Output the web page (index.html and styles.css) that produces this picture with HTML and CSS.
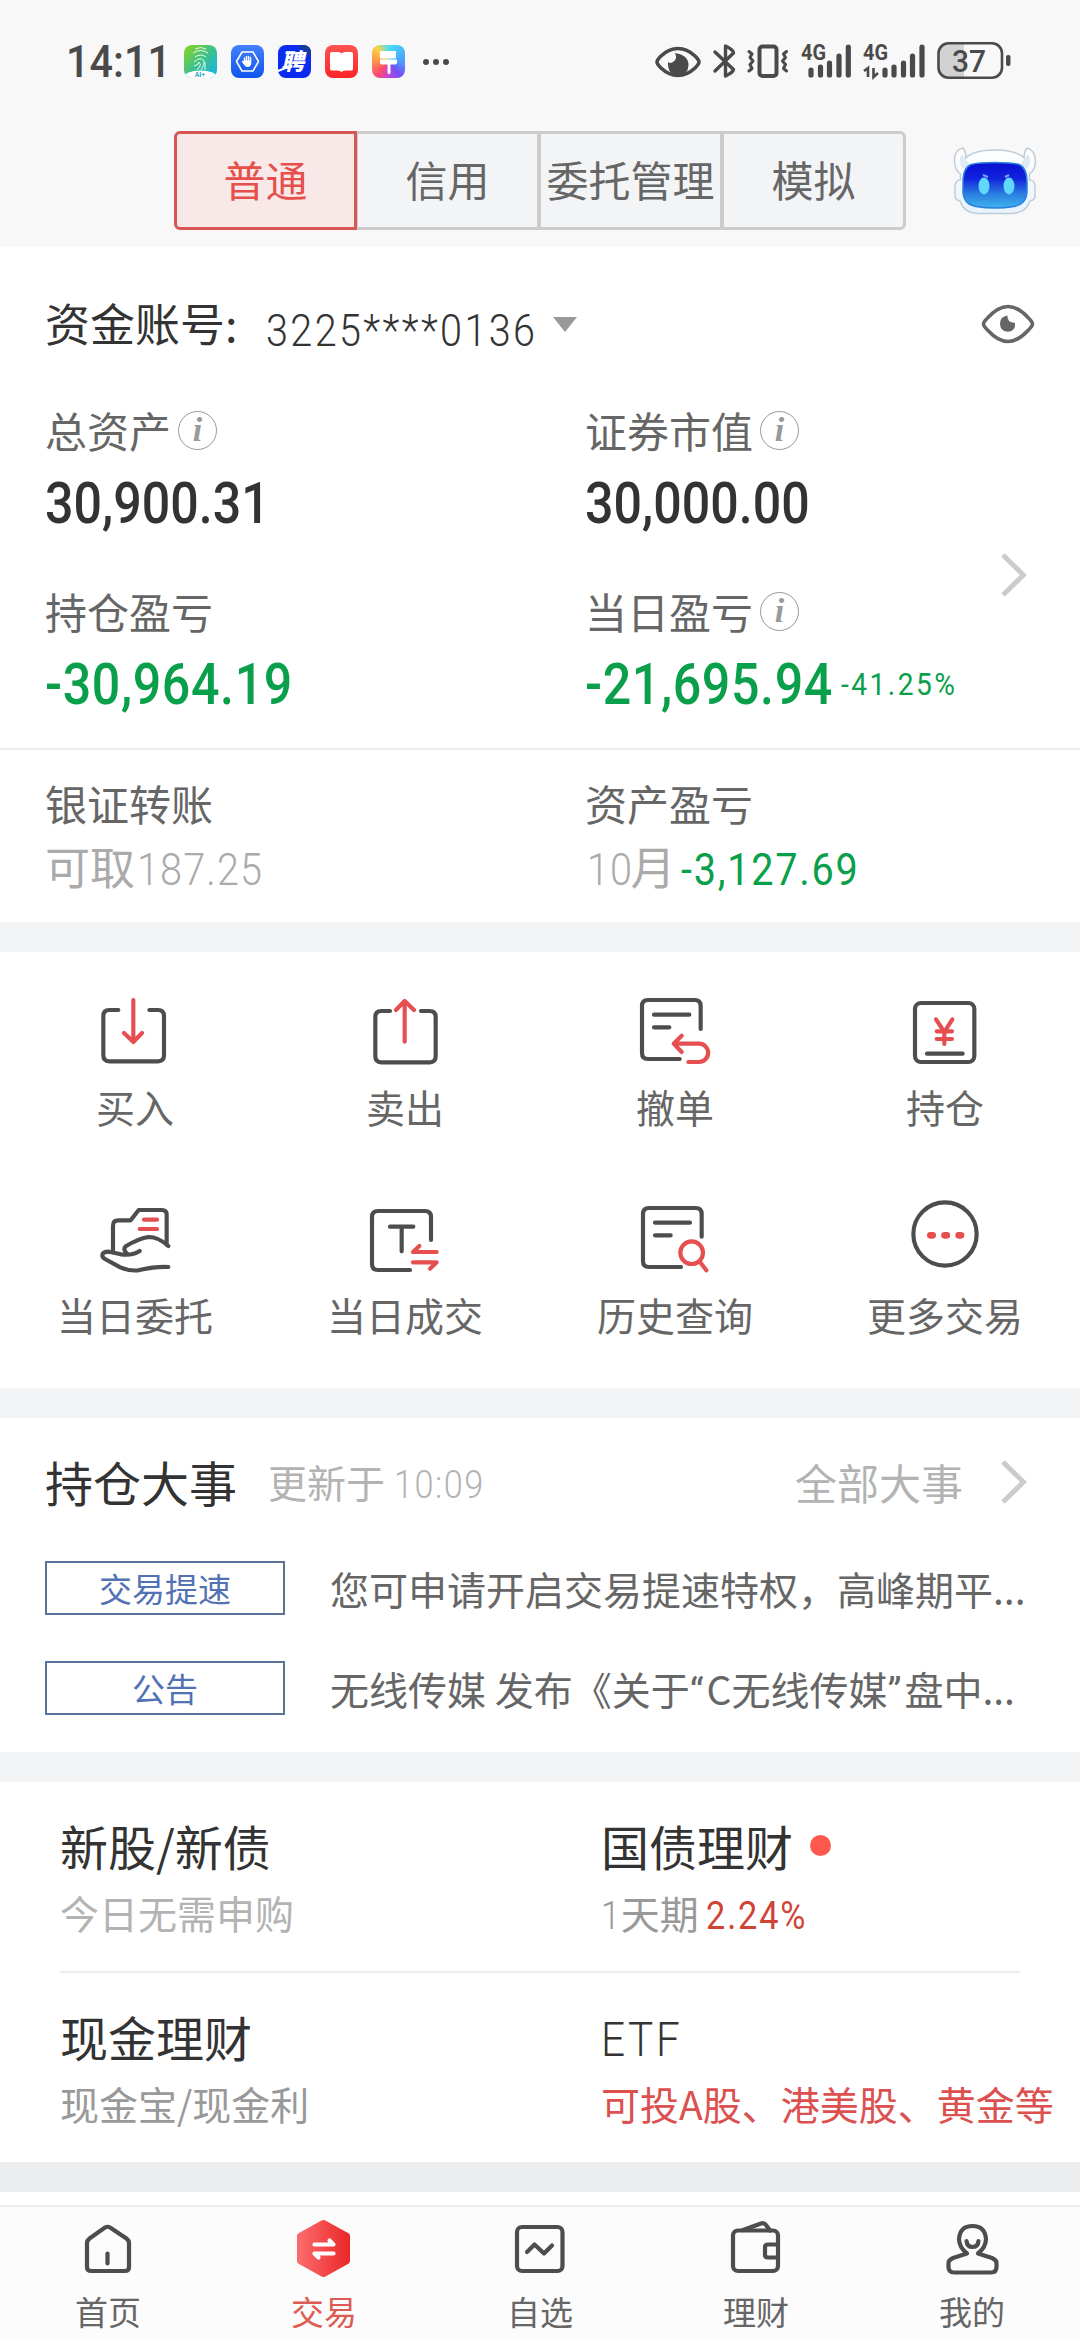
FILE: index.html
```
<!DOCTYPE html>
<html lang="zh-CN">

<head>
    <meta charset="UTF-8">
    <meta name="viewport" content="width=device-width, initial-scale=1.0">
    <title>交易</title>
    <link rel="stylesheet" href="styles.css">
</head>

<body>
    <header>
        <div class="status">
            <span class="time">14:11</span>
            <div class="apps">
                <svg viewBox="0 0 33 33">
                    <defs>
                        <linearGradient id="finger" x1="0" y1="0" x2="1" y2="1">
                            <stop offset="0" stop-color="#8fd61c" />
                            <stop offset=".5" stop-color="#3cc08c" />
                            <stop offset="1" stop-color="#0fb4f0" />
                        </linearGradient>
                        <clipPath id="round"><rect width="33" height="33" rx="8" /></clipPath>
                    </defs>
                    <g clip-path="url(#round)">
                        <rect width="33" height="33" fill="url(#finger)" />
                        <ellipse cx="16.500" cy="32" rx="17" ry="6.500" fill="#fff" />
                        <g fill="none" stroke="#e6fbe9" stroke-width="1">
                            <path d="M11 4q5.500-3 11 0M9 8q7.500-5 15 0M11 12q6-4 11 0M10 17q7-6 10-1q1 4-3 9M10 21q5-1 5-4M14 18q3-1 2 3l-3 4M21 17v8" />
                        </g>
                    </g>
                    <text x="11" y="32" font-size="6.500" font-weight="700" fill="#27a5b8">AI+</text>
                </svg>
                <svg viewBox="0 0 33 33">
                    <defs>
                        <linearGradient id="guard" x1="0" y1="0" x2="0" y2="1">
                            <stop offset="0" stop-color="#4480f8" />
                            <stop offset="1" stop-color="#0f55ee" />
                        </linearGradient>
                    </defs>
                    <rect width="33" height="33" rx="8" fill="url(#guard)" />
                    <path d="M11 7h11l5.500 9.500L22 26H11L5.500 16.500z" fill="none" stroke="#fff" stroke-width="1.500" stroke-linejoin="round" />
                    <path d="M13.500 17v-4M15.500 17v-5.500M17.500 17v-5.500M19.500 17v-4.500" stroke="#fff" stroke-width="1.400" stroke-linecap="round" />
                    <path d="M12.800 15.500h7.400v3q-.5 3.500-3.500 3.500-2 0-3.500-2l-2.500-3.500 1-.5z" fill="#fff" />
                </svg>
                <svg viewBox="0 0 33 33">
                    <rect width="33" height="33" rx="8" fill="#0b2bee" />
                    <path d="M20 0h5q8 0 8 8v4z" fill="#173a94" />
                    <text x="8.500" y="25" font-size="23" font-weight="900" fill="#fff" transform="skewX(-12)">聘</text>
                    <path d="M0 26l10-4" stroke="#fff" stroke-width="2" />
                </svg>
                <svg viewBox="0 0 33 33">
                    <defs>
                        <linearGradient id="book" x1="0" y1="0" x2="0" y2="1">
                            <stop offset="0" stop-color="#fb5550" />
                            <stop offset="1" stop-color="#fb2427" />
                        </linearGradient>
                    </defs>
                    <rect width="33" height="33" rx="8" fill="url(#book)" />
                    <path d="M5 9q0-2 2-2h6q2.500 0 3.500 1.500Q17.500 7 20 7h6q2 0 2 2v15q0 1.500-2 1.500h-6q-2 0-3.500 1.500-1.500-1.500-3.500-1.500H7Q5 25.500 5 24z" fill="#fff" />
                </svg>
                <div class="theme-app">
                    <svg viewBox="0 0 33 33">
                        <rect x="8" y="6" width="16" height="7.500" rx="1" fill="#fff" />
                        <path d="M8 14.500h17v3q0 2-3 2h-3.500V28q-1.500 2.500-3 0v-8.500H11q-3 0-3-2z" fill="#fff" />
                    </svg>
                </div>
            </div>
            <svg class="dots" width="28" height="8" viewBox="0 0 28 8" fill="#4a4a4a">
                <circle cx="4" cy="4" r="3" />
                <circle cx="14" cy="4" r="3" />
                <circle cx="24" cy="4" r="3" />
            </svg>
            <svg class="system" width="360" height="44" viewBox="650 40 360 44">
                <g fill="none" stroke="#4a4a4a" stroke-width="3.600" stroke-linecap="round" stroke-linejoin="round">
                    <path d="M656 62q0-2 4-6 8-7.500 17-7.500t17 7.500q4 4 4 6t-4 6q-8 7.500-17 7.500t-17-7.500q-4-4-4-6z" />
                    <path d="M714 52l18.500 17.500q-.5 3-8 6.500V46q7.500 3.500 8 7L714 71" stroke-width="3.400" />
                    <rect x="758.500" y="46.500" width="17" height="29.500" rx="3" stroke-width="4" />
                    <path d="M748 51.500l3 2.500-2 3.500 3 3.500-3 3.500 2 4-3 2.500M785.500 51.500l-3 2.500 2 3.500-3 3.500 3 3.500-2 4 3 2.500" stroke-width="3" />
                </g>
                <path d="M674 53q3 6-2 9-3 2-5 0-.5 13 10 14 10-.5 10.500-11 0-10-13.500-12z" fill="#4a4a4a" />
                <g stroke="#4a4a4a" stroke-width="5.200" stroke-linecap="round">
                    <path d="M810 70v5M819.500 67v8M828.500 63v12M838 56v19M847.300 47v28" />
                    <path d="M884 70v5M893 67v8M902.500 63v12M911.500 56v19M921 47v28" />
                </g>
                <g class="net" fill="#4a4a4a">
                    <text x="800" y="60" textLength="25" lengthAdjust="spacingAndGlyphs">4G</text>
                    <text x="862" y="60" textLength="25" lengthAdjust="spacingAndGlyphs">4G</text>
                </g>
                <path d="M863 71l4-3v9M872.500 68v9l4.500-4" fill="none" stroke="#4a4a4a" stroke-width="2.600" />
                <path d="M963 44h-15q-10 0-10 10v13q0 10 10 10h15z" fill="#d2d2d2" />
                <rect x="937.500" y="43.300" width="63.500" height="34.400" rx="10" fill="none" stroke="#4a4a4a" stroke-width="2.600" />
                <rect x="1005" y="55" width="4.500" height="11" rx="2" fill="#4a4a4a" />
                <text class="charge" x="951" y="71.500" textLength="34" lengthAdjust="spacingAndGlyphs">37</text>
            </svg>
        </div>
        <div class="modes">
            <div class="tabs">
                <div class="tab active">普通</div>
                <div class="tab">信用</div>
                <div class="tab">委托管理</div>
                <div class="tab">模拟</div>
            </div>
            <svg class="robot" width="84" height="68" viewBox="0 0 84 68">
                <defs>
                    <linearGradient id="visor" x1="0" y1="0" x2="0" y2="1">
                        <stop offset="0" stop-color="#0a0fd0" />
                        <stop offset=".35" stop-color="#1122dd" />
                        <stop offset=".7" stop-color="#2c80e0" />
                        <stop offset="1" stop-color="#3fb4ee" />
                    </linearGradient>
                    <linearGradient id="shell" x1="0" y1="0" x2="0" y2="1">
                        <stop offset="0" stop-color="#ffffff" />
                        <stop offset="1" stop-color="#e6f3fd" />
                    </linearGradient>
                </defs>
                <path d="M10 1Q1 3 1.500 14q0 9 6 13v6q-5 0-5.500 6v10q0 4 5 5 4 12 18 12.500h34Q73 66 77 54q5-1 5-5V39q-.5-6-5.500-6v-6q6-4 6-13Q82 3 74 1q-3 4-3 10-8-8-29-8T13 11q0-6-3-10z" fill="url(#shell)" stroke="#c0ccd8" stroke-width="1.500" />
                <path d="M9 7q-5 8 1 15l6-5M75 7q5 8-1 15l-6-5" fill="#dfe9f4" />
                <path d="M42 15.500q17 0 24 2 8 3 8 18v10q-1 12-13 14-19 3-38 0-12-2-13-14v-10q0-15 8-18 7-2 24-2z" fill="url(#visor)" stroke="#2a80dc" stroke-width="1.500" />
                <ellipse cx="31" cy="39" rx="5.500" ry="8.500" fill="#5fd8fb" />
                <ellipse cx="56" cy="39" rx="5.500" ry="8.500" fill="#5fd8fb" />
                <path d="M30 28l5 2M52 30l4-2" stroke="#7aa4ff" stroke-width="2" />
            </svg>
        </div>
    </header>

    <section class="account">
        <div class="account-row">
            <span class="account-label">资金账号:</span>
            <div class="account-no"><span class="num">3225****0136</span></div>
            <svg class="caret" width="24" height="15" viewBox="0 0 24 15"><path d="M0 0h24L12 15z" fill="#999" /></svg>
            <svg class="eye" width="54" height="42" viewBox="0 0 54 42">
                <path d="M2.500 21q0-2 4-6Q17 3.500 27 3.500T47.500 15q4 4 4 6t-4 6Q37 38.500 27 38.500T6.500 27q-4-4-4-6z" fill="none" stroke="#666" stroke-width="3.600" />
                <path d="M26.500 12.500q-1 6.500 7.500 7.500 1 8.500-7.500 8.800-7.500-.5-7.500-8.300 0-7 7.500-8z" fill="#666" />
            </svg>
        </div>
        <div class="stats">
            <div class="stats-grid">
                <div class="stat">
                    <div class="label">总资产<i class="info">i</i></div>
                    <div class="value"><span class="num">30,900.31</span></div>
                </div>
                <div class="stat">
                    <div class="label">证券市值<i class="info">i</i></div>
                    <div class="value"><span class="num">30,000.00</span></div>
                </div>
                <div class="stat">
                    <div class="label">持仓盈亏</div>
                    <div class="value green"><span class="num loss">-30,964.19</span></div>
                </div>
                <div class="stat">
                    <div class="label">当日盈亏<i class="info">i</i></div>
                    <div class="value green"><span class="num loss daily">-21,695.94</span><span class="num percent">-41.25%</span></div>
                </div>
            </div>
            <svg class="chevron" width="26" height="44" viewBox="0 0 26 44"><path d="M2 2l20.500 20L2 42" /></svg>
        </div>
        <div class="transfer">
            <div>
                <div class="label">银证转账</div>
                <div class="sub">可取<span class="num">187.25</span></div>
            </div>
            <div>
                <div class="label">资产盈亏</div>
                <div class="sub"><span class="num month">10</span>月<span class="num green">-3,127.69</span></div>
            </div>
        </div>
    </section>

    <section class="actions">
        <div class="action">
            <svg viewBox="0 0 240 240">
                <path d="M70 60H43Q25 60 25 78V196Q25 214 43 214H189Q207 214 207 196V78Q207 60 189 60H163" />
                <path class="red" d="M115 30V155M87 129L115 156L141 129" />
            </svg>
            <span>买入</span>
        </div>
        <div class="action">
            <svg viewBox="0 0 240 240">
                <path d="M75 63H49Q31 63 31 81V199Q31 217 49 217H194Q212 217 212 199V81Q212 63 194 63H168" />
                <path class="red" d="M119 155V33M93 60L119 33L147 60" />
            </svg>
            <span>卖出</span>
        </div>
        <div class="action">
            <svg viewBox="0 0 240 240">
                <path d="M134 207H39Q21 207 21 189V48Q21 30 39 30H179Q197 30 197 48V117M57 74H163M57 112H103" />
                <path class="red" d="M140 137L116 161L140 186M118 161H192A27 27 0 0 1 192 216H160" />
            </svg>
            <span>撤单</span>
        </div>
        <div class="action">
            <svg viewBox="0 0 240 240">
                <rect x="30" y="39" width="178" height="177" rx="18" />
                <path d="M66 191H173" />
                <path class="red" d="M93 88L118 126L142 88M118 124V162M95 124H141M95 147H141" />
            </svg>
            <span>持仓</span>
        </div>
        <div class="action">
            <svg viewBox="0 0 240 240">
                <path d="M54 156V83Q54 67 70 67H107L131 36H201Q215 36 215 50V140" />
                <path d="M220 144Q190 117 161 117Q132 121 92 145Q82 154 97 168M134 159Q112 174 78 169L42 161Q22 161 22 172Q22 179 30 183L76 208Q105 220 130 217Q180 205 220 207" />
                <path class="red" d="M147 65H186M134 93H186" />
            </svg>
            <span>当日委托</span>
        </div>
        <div class="action">
            <svg viewBox="0 0 240 240">
                <path d="M135 216H39Q21 216 21 198V57Q21 39 39 39H180Q198 39 198 57V126M75 86H145M110 86V160" />
                <path class="red" d="M163 144L144 162H215M144 193H215L195 212" />
            </svg>
            <span>当日成交</span>
        </div>
        <div class="action">
            <svg viewBox="0 0 240 240">
                <path d="M138 207H42Q24 207 24 189V48Q24 30 42 30H182Q200 30 200 48V116M60 74H165M60 112H107" />
                <circle class="red" cx="170" cy="164" r="34" />
                <path class="red" d="M195 192L214 217" />
            </svg>
            <span>历史查询</span>
        </div>
        <div class="action">
            <svg viewBox="0 0 240 240">
                <circle cx="120" cy="108" r="95" />
                <path class="more" d="M76 112h7M118.500 112h7M161 112h7" />
            </svg>
            <span>更多交易</span>
        </div>
    </section>

    <section class="events">
        <div class="events-head">
            <h2>持仓大事</h2>
            <span class="updated">更新于 <span class="num">10:09</span></span>
            <span class="all">全部大事</span>
            <svg class="chevron" width="26" height="44" viewBox="0 0 26 44"><path d="M2 2l20.500 20L2 42" /></svg>
        </div>
        <div class="event">
            <span class="tag">交易提速</span>
            <p>您可申请开启交易提速特权，高峰期平...</p>
        </div>
        <div class="event">
            <span class="tag">公告</span>
            <p>无线传媒 发布《关于<span class="quote">“</span>C无线传媒<span class="quote">”</span>盘中...</p>
        </div>
    </section>

    <section class="products">
        <div class="product">
            <h3>新股/新债</h3>
            <p>今日无需申购</p>
        </div>
        <div class="product">
            <h3>国债理财<i class="dot"></i></h3>
            <p class="dark"><span class="num one">1</span>天期<span class="num rate">2.24%</span></p>
        </div>
        <div class="product">
            <h3>现金理财</h3>
            <p class="dark">现金宝/现金利</p>
        </div>
        <div class="product">
            <h3><span class="num">ETF</span></h3>
            <p class="hot">可投A股、港美股、黄金等</p>
        </div>
    </section>

    <footer>
        <div class="nav">
            <svg viewBox="0 0 60 60">
                <path d="M27 9.500Q29.500 8 32 9.500L48.500 20.500Q51 22.500 51 25V49Q51 53 47 53H13Q9 53 9 49V25Q9 22.500 11.500 20.500z" />
                <path d="M29.500 35.500V45.500" />
            </svg>
            <span>首页</span>
        </div>
        <div class="nav current">
            <svg viewBox="0 0 60 60">
                <defs>
                    <linearGradient id="hexagon">
                        <stop offset="0" stop-color="#fb6a6a" />
                        <stop offset="1" stop-color="#ec2a2c" />
                    </linearGradient>
                </defs>
                <path d="M29.500 5L53 18V43L29.500 56L6 43V18z" fill="url(#hexagon)" stroke="url(#hexagon)" stroke-width="6" />
                <path d="M20.500 26.500H39.500L35.500 22.500M39.500 35.500H20.500L24.500 39.500" stroke="#fff" />
            </svg>
            <span>交易</span>
        </div>
        <div class="nav">
            <svg viewBox="0 0 60 60">
                <rect x="7" y="9" width="45.500" height="44" rx="5" />
                <path d="M17 34L24.500 26.500L34 35.500L42 27.500" />
            </svg>
            <span>自选</span>
        </div>
        <div class="nav">
            <svg viewBox="0 0 60 60">
                <rect x="7" y="12.500" width="45" height="40.500" rx="5" />
                <path d="M17 12L35 5.500Q38 4.500 40 7L44 12.500M52 26.500H42Q39 26.500 39 29V37Q39 39.500 42 39.500H52" />
            </svg>
            <span>理财</span>
        </div>
        <div class="nav">
            <svg viewBox="0 0 60 60">
                <path d="M25 35.500Q17 29 17 21Q18 8 30.500 8T44 21Q44 29 36 35.500L50 40Q54.500 42 54.500 45V49Q54.500 54.500 49 54.500H12Q6.500 54.500 6.500 49V45Q6.500 42 11 40z" />
                <path d="M24.500 23Q25 29 30.500 29T36.500 23" />
            </svg>
            <span>我的</span>
        </div>
    </footer>
</body>

</html>
```
FILE: styles.css
```
html,
body {
    margin: 0;
    height: 2340px;
}

body {
    display: flex;
    flex-direction: column;
    width: 1080px;
    overflow: hidden;
    background: #f3f4f6;
    color: #333;
    font-family: "Noto Sans CJK SC", sans-serif;
    font-size: 42px;
    white-space: nowrap;
}

h2,
h3,
p {
    margin: 0;
    font-weight: 400;
}

svg {
    display: block;
    flex-shrink: 0;
}

section {
    background: #fff;
}

/* narrow figures used for all amounts */
.num {
    display: inline-block;
    font-family: Roboto, sans-serif;
    transform: scaleX(0.88);
    transform-origin: 0 50%;
}

.green {
    color: #0a9f4a;
}

/* header */
header {
    height: 247px;
    background: #f8f8f8;
}

.status {
    display: flex;
    align-items: center;
    height: 123px;
    padding: 0 69px 0 66px;
}

.time {
    width: 118px;
    font-family: Roboto, sans-serif;
    font-size: 44px;
    font-weight: 500;
    color: #4a4a4a;
    transform: scaleX(0.94);
    transform-origin: 0 50%;
}

.apps {
    display: flex;
    gap: 14px;
}

.apps svg,
.theme-app {
    width: 33px;
    height: 33px;
    overflow: visible;
}

.theme-app {
    border-radius: 8px;
    background: conic-gradient(#48dff5, #4a9cff 90deg, #7350f5 140deg, #c244d8 180deg, #ff4a6e 220deg, #ff9d4a 280deg, #f8d24a 320deg, #48dff5);
}

.dots {
    margin-left: 17px;
}

.system {
    margin-left: auto;
}

.net {
    font: 700 22px Roboto, sans-serif;
}

.charge {
    font: 500 32px Roboto, sans-serif;
    fill: #4a4a4a;
}

.modes {
    display: flex;
    align-items: center;
    height: 115px;
    padding-left: 174px;
}

.tabs {
    display: flex;
}

.tab {
    box-sizing: border-box;
    width: 183px;
    height: 99px;
    border: 3px solid #ccc;
    border-left-width: 1px;
    background: #f3f4f6;
    color: #666;
    line-height: 90px;
    text-align: center;
}

.tab.active {
    border: 3px solid #d85555;
    border-radius: 6px 0 0 6px;
    background: #f8e9e8;
    color: #e64f4b;
}

.tab:last-child {
    border-radius: 0 6px 6px 0;
}

.robot {
    margin-left: 47px;
}

/* account */
.account-row {
    display: flex;
    align-items: center;
    height: 154px;
    padding: 0 45px;
}

.account-label {
    width: 221px;
    padding-bottom: 3px;
    font-size: 45px;
}

.account-no {
    width: 287px;
    padding-top: 5px;
    font-size: 45px;
    font-weight: 350;
    letter-spacing: 2.7px;
}

.eye {
    margin-left: auto;
}

.stats {
    display: flex;
    align-items: center;
    padding-left: 45px;
    border-bottom: 2px solid #ececec;
}

.stats-grid {
    display: grid;
    grid-template-columns: 540px 416px;
    row-gap: 39px;
    padding-bottom: 24px;
}

.label {
    display: flex;
    align-items: center;
    height: 57px;
    padding-bottom: 3px;
    color: #666;
}

.info {
    box-sizing: border-box;
    width: 39px;
    height: 39px;
    margin: 1px 0 0 7px;
    border: 1.5px solid #999;
    border-radius: 50%;
    color: #999;
    font: italic 700 34px/35px "Liberation Serif", serif;
    text-align: center;
}

.value {
    height: 82px;
    font-size: 57px;
    font-weight: 500;
    line-height: 74px;
}

.loss {
    letter-spacing: 0.7px;
}

.daily {
    width: 256px;
}

.percent {
    font-size: 32px;
    font-weight: 400;
    letter-spacing: 2.8px;
    vertical-align: 9px;
}

.chevron {
    fill: none;
    stroke: #ccc;
    stroke-width: 5;
}

.transfer {
    display: grid;
    grid-template-columns: 540px 1fr;
    height: 148px;
    padding: 24px 0 0 45px;
}

.sub {
    color: #aaa;
    font-size: 45px;
    line-height: 63px;
}

.sub .num {
    margin-left: 2px;
    font-weight: 350;
    letter-spacing: 1.3px;
}

.sub .green {
    margin-left: 5px;
    font-weight: 400;
    letter-spacing: 2px;
}

.sub .month {
    margin-right: -9px;
}

/* trade shortcuts */
.actions {
    display: grid;
    grid-template-columns: repeat(4, 270px);
    grid-auto-rows: 208px;
    height: 398px;
    margin-top: 30px;
    padding-top: 38px;
}

.action {
    display: flex;
    flex-direction: column;
    align-items: center;
    color: #666;
    font-size: 39px;
    line-height: 56px;
}

.action svg {
    width: 80px;
    height: 80px;
    margin-bottom: 8px;
    fill: none;
    stroke: #4d4d4d;
    stroke-width: 12.5;
    stroke-linecap: round;
    stroke-linejoin: round;
}

.action .red {
    stroke: #e64f4f;
}

.action .more {
    stroke: #e64f4f;
    stroke-width: 20;
}

/* events */
.events {
    height: 334px;
    margin-top: 30px;
}

.events-head {
    display: flex;
    align-items: center;
    height: 128px;
    padding: 0 53px 0 45px;
}

h2 {
    width: 223px;
    padding-bottom: 3px;
    font-size: 48px;
}

.updated {
    padding-bottom: 2px;
    color: #b3b3b3;
    font-size: 39px;
}

.updated .num {
    font-weight: 350;
    letter-spacing: 1.7px;
}

.all {
    margin-left: auto;
    margin-right: 38px;
    padding-bottom: 2px;
    color: #b3b3b3;
}

.event {
    display: flex;
    align-items: center;
    gap: 45px;
    height: 84px;
    margin-bottom: 16px;
    padding-left: 45px;
    color: #666;
    font-size: 39px;
}

.event p {
    padding-bottom: 1px;
}

.tag {
    box-sizing: border-box;
    width: 240px;
    height: 54px;
    border: 2px solid #5b7396;
    color: #5272b4;
    font-size: 33px;
    line-height: 50px;
    text-align: center;
}

.quote {
    font-family: Roboto, sans-serif;
    letter-spacing: 3px;
}

/* products */
.products {
    display: grid;
    grid-template-columns: 541px 479px;
    grid-template-rows: 191px 189px;
    height: 380px;
    margin-top: 30px;
    padding-left: 60px;
    background: linear-gradient(#ececec, #ececec) 60px 189px / 960px 2px no-repeat #fff;
}

h3 {
    display: flex;
    align-items: center;
    height: 70px;
    padding-top: 28px;
    font-size: 48px;
}

h3 .num {
    padding-top: 7px;
    font-weight: 350;
    letter-spacing: 3px;
}

.dot {
    width: 21px;
    height: 21px;
    margin-left: 17px;
    border-radius: 50%;
    background: #ff584c;
}

.product p {
    color: #b3b3b3;
    font-size: 39px;
    line-height: 65px;
}

.product .dark {
    color: #999;
}

.one {
    margin-right: -2px;
    font-weight: 350;
}

.rate {
    margin-left: 7px;
    color: #cf4436;
    letter-spacing: 2.1px;
}

.product .hot {
    color: #dc5050;
}

/* bottom bar */
footer {
    display: grid;
    grid-template-columns: repeat(5, 216px);
    height: 133px;
    margin-top: auto;
    border-top: 2px solid #ececec;
    background: #fcfcfc;
    box-shadow: 0 -13px #fff, 0 -43px #ebecee;
}

.nav {
    display: flex;
    flex-direction: column;
    align-items: center;
    padding-top: 11px;
    color: #666;
    font-size: 33px;
    line-height: 48px;
}

.nav svg {
    width: 60px;
    height: 60px;
    margin-bottom: 9px;
    fill: none;
    stroke: #4d4d4d;
    stroke-width: 4.2;
    stroke-linecap: round;
    stroke-linejoin: round;
}

.current {
    color: #de5b52;
}
```
